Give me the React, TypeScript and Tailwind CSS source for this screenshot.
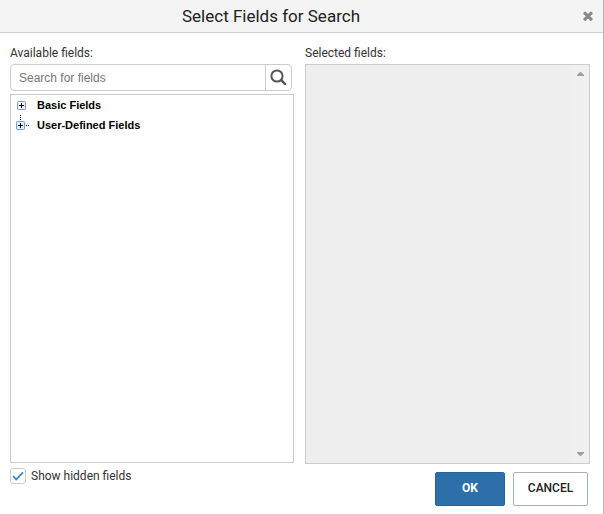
import { useState } from 'react'

const FIELD_GROUPS = ['Basic Fields', 'User-Defined Fields']

function SearchIcon() {
  return (
    <svg viewBox="0 0 17 17" className="h-[17px] w-[17px]" fill="none" stroke="currentColor">
      <circle cx="7" cy="7" r="5.6" strokeWidth="2" />
      <path d="M11.2 11.2L15 14.8" strokeWidth="2.5" strokeLinecap="round" />
    </svg>
  )
}

function CloseIcon() {
  return (
    <svg viewBox="302 302 1188 1252" className="h-[10px] w-[10px]" fill="currentColor">
      <path d="M1490 1322q0 40-28 68l-136 136q-28 28-68 28t-68-28l-294-294-294 294q-28 28-68 28t-68-28l-136-136q-28-28-28-68t28-68l294-294-294-294q-28-28-28-68t28-68l136-136q28-28 68-28t68 28l294 294 294-294q28-28 68-28t68 28l136 136q28 28 28 68t-28 68l-294 294 294 294q28 28 28 68z" />
    </svg>
  )
}

// Expander box; the last node also carries the dotted connector lines
function ExpandIcon({ connected }: { connected: boolean }) {
  return (
    <svg viewBox="0 0 15 20" className="h-5 w-[15px]">
      {connected ? (
        <>
          <path
            d="M4 0h1v1h-1zM4 2h1v1h-1zM4 4h1v1h-1zM10 10h1v1h-1zM12 10h1v1h-1z"
            fill="#000"
            shapeRendering="crispEdges"
          />
          <rect x="0.5" y="6.5" width="8" height="8" rx="0.8" fill="#e4eefa" stroke="#6f9fd0" />
          <path d="M2 10h5v1h-5zM4 8h1v5h-1z" fill="#000" shapeRendering="crispEdges" />
        </>
      ) : (
        <>
          <rect x="1.5" y="6.5" width="8" height="8" rx="0.8" fill="#f1f3f5" stroke="#7b98ba" />
          <path d="M3 10h5v1h-5zM5 8h1v5h-1z" fill="#000" shapeRendering="crispEdges" />
        </>
      )}
    </svg>
  )
}

export default function App() {
  const [query, setQuery] = useState('')
  const [showHidden, setShowHidden] = useState(true)

  return (
    <div
      role="dialog"
      aria-labelledby="dialog-title"
      className="flex min-h-screen flex-col border-r border-[#b5b5b5] bg-white font-['Roboto',sans-serif] text-xs text-[#333]"
    >
      <header className="flex h-[33px] items-center border-b border-[#ccc] bg-[#f4f4f4] pr-2.5">
        <h1 id="dialog-title" className="flex-1 text-center text-[17px] leading-8 text-[#222]">
          Select Fields for Search
        </h1>
        <button type="button" aria-label="Close" className="flex w-[51px] justify-end text-[#888]">
          <CloseIcon />
        </button>
      </header>

      <main className="grid flex-1 grid-cols-[284fr_285fr] gap-[11px] pt-3 pr-[13px] pb-2 pl-2.5">
        <section className="flex flex-col">
          <label htmlFor="field-search" className="mb-[3px] leading-4">
            Available fields:
          </label>
          <div className="mr-0.5 flex h-[27px] rounded-[4px] border border-[#ccc]">
            <input
              id="field-search"
              type="text"
              value={query}
              onChange={(e) => setQuery(e.target.value)}
              placeholder="Search for fields"
              className="min-w-0 flex-1 px-2 font-['Liberation_Sans',sans-serif] outline-none placeholder:text-[#777]"
            />
            <button
              type="button"
              aria-label="Search"
              className="flex w-[26px] items-center justify-center border-l border-[#ccc] text-[#555]"
            >
              <SearchIcon />
            </button>
          </div>
          <ul className="mt-[3px] flex-1 border border-[#ccc] px-[5px] font-['Liberation_Sans',sans-serif] text-[11px] font-bold text-black">
            {FIELD_GROUPS.map((name, i) => (
              <li key={name}>
                <button type="button" className="flex h-5 items-center gap-1.5">
                  <ExpandIcon connected={i > 0} />
                  {name}
                </button>
              </li>
            ))}
          </ul>
          <label className="mt-[5px] mb-[22px] flex h-4 items-center gap-[5px]">
            <span className="relative h-4 w-4">
              <input
                type="checkbox"
                checked={showHidden}
                onChange={(e) => setShowHidden(e.target.checked)}
                className="block h-4 w-4 appearance-none rounded-[3px] border border-[#ccc] bg-white"
              />
              {showHidden && (
                <svg
                  viewBox="0 0 16 16"
                  className="pointer-events-none absolute inset-0 h-4 w-4"
                  fill="none"
                  stroke="#3b8ad0"
                  strokeWidth="1.8"
                >
                  <path d="M3 8.2L6.2 11.4L13 4.4" />
                </svg>
              )}
            </span>
            Show hidden fields
          </label>
        </section>

        <section className="flex flex-col">
          <h2 className="mb-[3px] leading-4">Selected fields:</h2>
          <div className="flex flex-1 justify-end border border-[#ccc] bg-[#eee]">
            <div className="flex w-[17px] flex-col items-center justify-between bg-[#f0f0f0] py-[7px] text-[#a0a0a0]">
              <svg viewBox="0 0 7 4" className="h-1 w-[7px]" fill="currentColor">
                <path d="M0 4V3L3 0H4L7 3V4z" />
              </svg>
              <svg viewBox="0 0 7 4" className="h-1 w-[7px]" fill="currentColor">
                <path d="M0 0V1L3 4H4L7 1V0z" />
              </svg>
            </div>
          </div>
          <div className="mt-2 mr-0.5 flex justify-end gap-2">
            <button
              type="button"
              className="h-[34px] w-[70px] rounded-[2px] border border-[#2a6496] bg-[#2d6fa8] pb-0.5 font-bold text-white"
            >
              OK
            </button>
            <button
              type="button"
              className="h-[34px] w-[75px] rounded-[2px] border border-[#a9b1b8] bg-white pb-0.5 font-medium text-[#222]"
            >
              CANCEL
            </button>
          </div>
        </section>
      </main>
    </div>
  )
}
